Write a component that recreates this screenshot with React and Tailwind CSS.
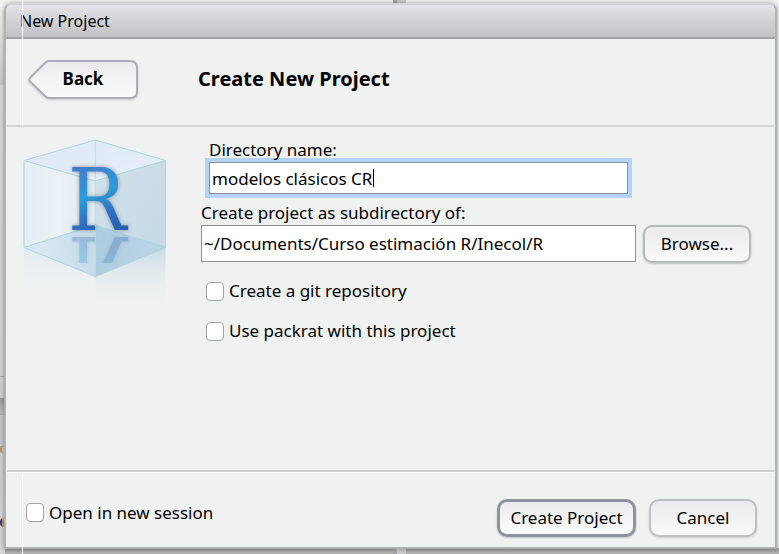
import { useState } from "react";

function CheckOption({ id, label }) {
  return (
    <label htmlFor={id} className="flex items-center gap-[5px]">
      <input
        id={id}
        type="checkbox"
        className="h-[19px] w-[18px] appearance-none rounded-[4px] border border-[#a3a3a3] bg-white checked:bg-[#6aa5e8]"
      />
      <span>{label}</span>
    </label>
  );
}

function CubeLogo() {
  return (
    <svg viewBox="22 138 146 180" className="h-[180px] w-[146px] shrink-0" role="img" aria-label="R project">
      <defs>
        <linearGradient id="letter" x1="0" y1="0" x2="0.25" y2="1">
          <stop offset="0" stopColor="#3465b8" />
          <stop offset="0.3" stopColor="#3f86d0" />
          <stop offset="0.52" stopColor="#2d9bd8" />
          <stop offset="0.75" stopColor="#2f6fc0" />
          <stop offset="1" stopColor="#2458a8" />
        </linearGradient>
        <linearGradient id="top" x1="0" y1="0" x2="1" y2="1">
          <stop offset="0" stopColor="#dbe8f4" />
          <stop offset="1" stopColor="#e8effa" />
        </linearGradient>
        <linearGradient id="leftFace" x1="0" y1="0" x2="1" y2="0">
          <stop offset="0" stopColor="#e3edf4" />
          <stop offset="0.5" stopColor="#ecf2f6" />
          <stop offset="1" stopColor="#dce9f0" />
        </linearGradient>
        <linearGradient id="rightFace" x1="0" y1="0" x2="1" y2="1">
          <stop offset="0" stopColor="#d3e2eb" />
          <stop offset="1" stopColor="#c2d7e6" />
        </linearGradient>
        <linearGradient id="floor" x1="0" y1="0" x2="1" y2="0">
          <stop offset="0" stopColor="#dcebf5" />
          <stop offset="0.5" stopColor="#c4dcea" />
          <stop offset="0.51" stopColor="#aecde1" />
          <stop offset="1" stopColor="#bdd5e5" />
        </linearGradient>
        <linearGradient id="fadeLeft" x1="0" y1="0" x2="0" y2="1">
          <stop offset="0" stopColor="#e1ebf3" />
          <stop offset="0.85" stopColor="#f0f2f1" stopOpacity="0" />
        </linearGradient>
        <linearGradient id="fadeRight" x1="0" y1="0" x2="0" y2="1">
          <stop offset="0" stopColor="#c8dbe7" />
          <stop offset="0.9" stopColor="#f0f2f1" stopOpacity="0" />
        </linearGradient>
        <clipPath id="mirror">
          <path d="M24 235H165.5V263H24Z" />
        </clipPath>
      </defs>
      <path d="M24 247.5 L95.3 276.5 L95.3 318 L24 300Z" fill="url(#fadeLeft)" />
      <path d="M95.3 276.5 L165.5 247.5 L165.5 300 L95.3 318Z" fill="url(#fadeRight)" />
      <path d="M24 160.5 L95.3 181 L95.3 276.5 L24 247.5Z" fill="url(#leftFace)" />
      <path d="M95.3 181 L165.5 160.5 L165.5 247.5 L95.3 276.5Z" fill="url(#rightFace)" />
      <path d="M24 160.5 L95.3 140 L165.5 160.5 L95.3 181Z" fill="url(#top)" />
      <path d="M24 247.5 L95.3 225 L165.5 247.5 L95.3 276.5Z" fill="url(#floor)" />
      <path d="M95.3 140V276.5" stroke="#bcdde5" fill="none" />
      <g clipPath="url(#mirror)" opacity="0.3">
        <use href="#cube-letter" transform="matrix(1 0 0 -1 0 467)" />
      </g>
      <path
        d="M24 160.5 L95.3 140 L165.5 160.5 L95.3 181Z M24 160.5V247.5 L95.3 276.5 L165.5 247.5V160.5"
        fill="none"
        stroke="#a5d5de"
      />
      <path d="M24 247.5 L95.3 225 L165.5 247.5" fill="none" stroke="#a5d5de" />
      <text
        id="cube-letter"
        x="68"
        y="230"
        className="font-['DejaVu_Serif_Condensed','DejaVu_Serif',serif] text-[86px] drop-shadow-[0_0_2px_rgba(0,0,0,0.35)]"
        fill="url(#letter)"
      >
        R
      </text>
    </svg>
  );
}

export default function App() {
  const [name, setName] = useState("modelos clásicos CR");
  const [edited, setEdited] = useState(false);
  const [parent, setParent] = useState("~/Documents/Curso estimación R/Inecol/R");

  return (
    <div className="relative flex min-h-screen flex-col overflow-hidden bg-[#f3f3f3] pt-[3px] pr-[2px] pb-[5px] pl-1 font-['Noto_Sans',sans-serif] text-[17px] leading-6 text-black">
      <div className="absolute bottom-0 left-0 h-[6px] w-full bg-linear-to-b from-[#969698] to-[#b4b4b4]" />
      <div className="absolute top-0 left-[393px] h-full w-[13px] border-l-4 border-[#a9a9ad] bg-[#cbcbce]" />
      <div className="absolute inset-y-0 left-0 flex w-[5px] flex-col overflow-hidden">
        <div className="h-[85px] bg-linear-to-b from-[#f3f3f3] to-[#cacaca]" />
        <div className="h-[291px] bg-linear-to-b from-[#d8d8d8] to-[#d2d2d3]" />
        <div className="h-[22px] border-t border-[#a5aaae] bg-[#cfd1d3]" />
        <div className="h-[16px] bg-linear-to-b from-[#9c9c9f] to-[#b9bbbe]" />
        <div className="h-[33px] border-y border-[#a9acb0] bg-[#c3c6ca]" />
        <div className="grow bg-linear-to-b from-[#cdcdcd] to-[#d6d6d6]" />
      </div>

      <main className="relative flex grow flex-col overflow-hidden rounded-t-[8px] border-2 border-[#b0b0b5] border-t-[#d2d2d5] bg-[#f0f2f1] shadow-[0_0_4px_rgba(0,0,0,0.35)]">
        <header className="flex h-[34px] items-center border-b-2 border-[#a4a3ab] bg-linear-to-b from-[#e4e4e8] to-[#c2c2c6] px-[14px]">
          <h1 className="text-[16px]">New Project</h1>
        </header>

        <section className="mx-px flex h-[88px] items-center border-b-2 border-[#d3d4d4] pb-[7px] pl-[21px]">
          <button type="button" className="relative h-[40px] w-[110px] shrink-0 font-bold">
            <svg viewBox="0 0 110 40" className="absolute inset-0 h-[40px] w-[110px] drop-shadow-[0_1px_1px_rgba(0,0,0,0.15)]" aria-hidden="true">
              <defs>
                <linearGradient id="backFill" x1="0" y1="0" x2="0" y2="1">
                  <stop offset="0" stopColor="#ececee" />
                  <stop offset="1" stopColor="#fafafb" />
                </linearGradient>
              </defs>
              <path
                d="M21 2 H102 Q109 2 109 9 V32 Q109 39 102 39 H21 Q19 39 17 37 L2 22.500 Q0.500 21 2 19 L17 4 Q19 2 21 2Z"
                fill="url(#backFill)"
                stroke="#acadb7"
                strokeWidth="2"
              />
            </svg>
            <span className="relative">Back</span>
          </button>
          <h2 className="ml-[60px] text-[20px] font-bold">Create New Project</h2>
        </section>

        <section className="flex grow pt-[11px] pl-4">
          <CubeLogo />
          <div className="ml-[33px] grow pr-6">
            <div className="mr-[115px] px-2">
              <label htmlFor="directory" className="relative z-10 block">
                Directory name:
              </label>
              <div className="relative">
                <input
                  id="directory"
                  type="text"
                  value={name}
                  onFocus={() => setEdited(true)}
                  onChange={(e) => setName(e.target.value)}
                  className="block h-[32px] w-full rounded-none border border-[#8a8f98] bg-white px-[2px] ring-4 ring-[#b3d3f8] outline-none"
                />
                {!edited && <span className="absolute top-[7px] left-[164px] h-[18px] w-px bg-black" />}
              </div>
            </div>
            <label htmlFor="parent" className="mt-[7px] block">
              Create project as subdirectory of:
            </label>
            <div className="flex gap-[7px]">
              <input
                id="parent"
                type="text"
                value={parent}
                onChange={(e) => setParent(e.target.value)}
                className="h-[37px] min-w-0 grow border border-[#919191] bg-white px-[2px] outline-none"
              />
              <button
                type="button"
                className="h-[38px] w-[108px] shrink-0 rounded-[9px] border-2 border-[#b6b8ba] bg-linear-to-b from-[#ebebee] to-[#f9f9fa] shadow-[0_1px_2px_rgba(0,0,0,0.2)]"
              >
                Browse...
              </button>
            </div>
            <div className="mt-[16px] flex flex-col gap-4 pl-[5px]">
              <CheckOption id="git" label="Create a git repository" />
              <CheckOption id="packrat" label="Use packrat with this project" />
            </div>
          </div>
        </section>

        <footer className="mx-px flex h-[77px] shrink-0 items-center justify-between border-t-2 border-[#cfd1d0] pt-[6px] pr-[17px] pl-[19px] shadow-[inset_0_1px_0_#ffffff]">
          <CheckOption id="session" label="Open in new session" />
          <div className="flex gap-[13px] pt-[10px]">
            <button
              type="submit"
              className="h-[38px] w-[139px] rounded-[10px] border-3 border-[#8d939e] bg-linear-to-b from-[#ebebee] to-[#fbfbfc] shadow-[0_1px_2px_rgba(0,0,0,0.2)]"
            >
              Create Project
            </button>
            <button
              type="button"
              className="h-[38px] w-[108px] rounded-[10px] border-2 border-[#bdbfc1] bg-linear-to-b from-[#ebebee] to-[#f9f9fa] shadow-[0_1px_2px_rgba(0,0,0,0.15)]"
            >
              Cancel
            </button>
          </div>
        </footer>
      </main>

      <div className="absolute top-0 left-[22px] h-[126px] w-px bg-white" />
      <div className="absolute bottom-0 left-[22px] h-[80px] w-px bg-white" />
      <div className="absolute bottom-[101px] left-0 h-[7px] w-[3px] rounded-l-full border-l-2 border-[#b48a4c]" />
      <div className="absolute bottom-[27px] left-0 h-[9px] w-[4px] rounded-l-full border-r-2 border-l-2 border-r-[#b48a4c] border-l-[#2b3c86]" />
    </div>
  );
}
